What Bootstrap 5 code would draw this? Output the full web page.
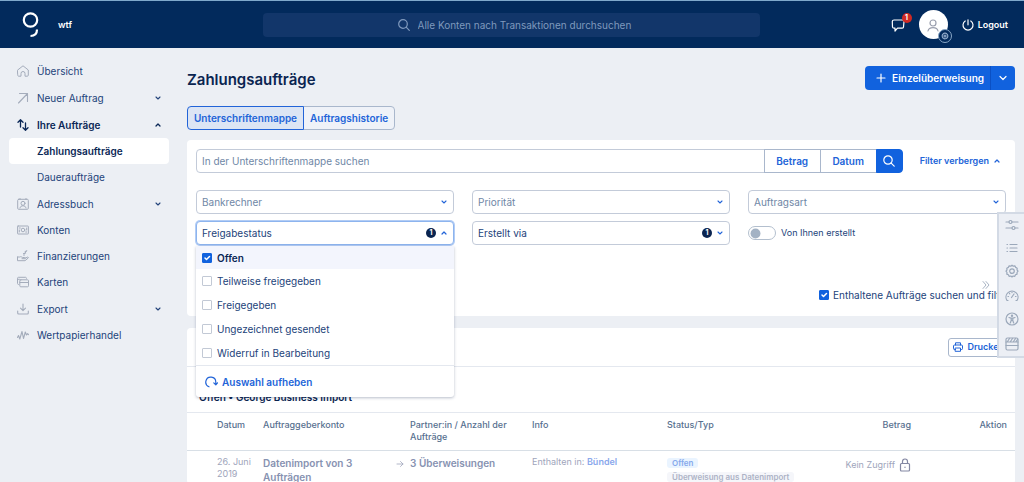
<!DOCTYPE html>
<html lang="de">
<head>
<meta charset="utf-8">
<meta name="viewport" content="width=device-width, initial-scale=1">
<title>Zahlungsaufträge</title>
<link href="https://cdn.jsdelivr.net/npm/bootstrap@5.3.0/dist/css/bootstrap.min.css" rel="stylesheet">
<style>
:root { --navy:#022a5c; --ink:#23437a; --blue:#1162de; --link:#2264d8; --muted:#6f87a6; --line:#c3cbd9; --soft:#e4e8ef; --page:#eceff4; }
body { font-family:Inter,"Liberation Sans",sans-serif; font-size:10px; line-height:12px; color:var(--ink); background:var(--page); height:100vh; overflow:hidden; }
svg { display:block; fill:none; stroke:currentColor; stroke-width:1.2; stroke-linecap:round; stroke-linejoin:round; flex:none; }
a { text-decoration:none; color:inherit; }
.topbar { background:var(--navy); border-top:1px solid #7fa9cc; height:48px; color:#fff; }
.brand-area { width:263px; padding-left:22px; gap:19px; }
.brand-area, .logout { font-size:9px; }
.global-search { background:#12366a; border-radius:4px; height:24px; width:497px; padding-left:10px; color:#7f99bd; }
.global-search input { background:none; border:0; padding:0; width:218px; color:inherit; font-size:10px; line-height:14px; outline:0; }
.find-input::placeholder { color:var(--muted); opacity:1; }
.global-search input::placeholder { color:#7f99bd; opacity:1; }
.plain { border:0; background:none; padding:0; color:inherit; font-size:inherit; line-height:inherit; }
.w6 { font-weight:600; }
.user-tools { gap:14px; }
.counter { top:-5px; right:-7px; width:10px; height:10px; border-radius:50%; background:#d02a24; font-size:7px; line-height:10px; text-align:center; font-weight:700; }
.avatar { width:29px; height:29px; border-radius:50%; background:#fff; color:#9a9fae; }
.gear-dot { right:-4px; bottom:-4px; width:14px; height:14px; border-radius:50%; background:var(--navy); border:1px solid #8aa7c7; color:#8fa9c9; }
.side { width:187px; padding:10px 18px 0 9px; flex:none; }
.side a { height:26px; display:flex; align-items:center; padding:0 7px 0 8px; gap:8px; border-radius:4px; }
.side a.tall { height:27px; }
.side a svg { color:#a4acbb; stroke-width:1.1; }
.side a svg.chev { color:var(--ink); margin-left:auto; }
.side a.open svg { color:#0a2756; stroke-width:1.3; }
.side a.sub { padding-left:28px; }
.side a.now { background:#fff; }
.side a.now, .side a.open { color:#0a2756; font-weight:600; }
.content-area { min-width:0; padding-right:9px; }
.title-row { padding:18px 0 16px; }
h1 { font-size:15px; line-height:20px; font-weight:600; color:#0a2450; margin:0; padding-top:4px; }
.main-btn { background:var(--blue); color:#fff; border:0; height:24px; font-size:10px; line-height:12px; font-weight:600; padding:0 6px 0 11px; border-radius:4px 0 0 4px; gap:6px; }
.main-btn.more { padding:0 7px; border-left:1px solid #0b50c4; border-radius:0 4px 4px 0; }
.tabs { margin-bottom:10px; }
.tabs .btn { height:24px; font-size:10px; line-height:12px; font-weight:600; color:var(--link); border:1px solid #a9b7cc; border-radius:4px; padding:0 6px; background:#eff2f8; }
.tabs .btn.active { background:#dce5f4; border-color:var(--link); color:var(--link); }
.panel { background:#fff; border-radius:4px; }
.filters { padding:9px 9px 15px; }
.find-input { height:24px; font-size:10px; line-height:12px; border:1px solid var(--line); border-radius:4px 0 0 4px; padding:0 5px; min-width:0; }
.find-btn { height:24px; border:1px solid #a9b7cc; background:#fff; color:var(--link); font-size:10px; line-height:12px; font-weight:600; padding:0; width:57px; margin-left:-1px; }
.find-btn.go { width:27px; background:var(--blue); border-color:var(--blue); color:#fff; border-radius:0 4px 4px 0; }
.filter-link { color:var(--link); font-size:9px; font-weight:600; gap:5px; padding:0 6px 0 17px; }
.filter-grid { display:grid; grid-template-columns:repeat(3,1fr); gap:7px 18px; margin-top:17px; }
.form-select, .pick { width:100%; height:24px; font-size:10px; line-height:12px; border:1px solid var(--line); border-radius:4px; padding:0 5px; color:var(--muted); background-color:#fff; }
.form-select { background-position:right 5px center; background-size:8px 8px; background-image:url("data:image/svg+xml,%3Csvg xmlns='http://www.w3.org/2000/svg' viewBox='0 0 8 8'%3E%3Cpath d='M2 3l2 2 2-2' fill='none' stroke='%232264d8' stroke-width='1.1' stroke-linecap='round'/%3E%3C/svg%3E"); }
.form-select.set, .pick { color:var(--ink); }
.pick { border-color:#8db4ee; box-shadow:0 0 0 1px #b3cdf5; }
.num { width:10px; height:10px; border-radius:50%; background:#0a2450; color:#fff; font-size:7px; line-height:10px; font-weight:700; text-align:center; }
.num.over { right:18px; top:7px; }
.pick-menu { top:25px; left:0; right:0; z-index:5; background:#fff; box-shadow:0 1px 3px rgba(20,40,80,.3); border-radius:0 0 3px 3px; }
.pick-menu label { display:flex; align-items:center; height:24px; padding-left:6px; gap:5px; }
.pick-menu label.on { background:#f3f5fd; color:#0a2756; font-weight:600; height:23px; }
.form-check-input { width:10px; height:10px; margin:0; border:1px solid #c2c9d5; flex:none; }
.form-check-input[type=checkbox] { border-radius:1px; }
.form-check-input:checked { background-color:var(--blue); border-color:var(--blue); background-size:10px 10px; }
.form-switch .form-check-input[type=checkbox] { width:28px; height:14px; border-radius:7px; border-color:#b3bfce; background-size:11px 11px; margin:0; background-position:left 1px center; --bs-form-switch-bg:url("data:image/svg+xml,%3Csvg xmlns='http://www.w3.org/2000/svg' viewBox='-4 -4 8 8'%3E%3Ccircle r='3.6' fill='%23a3b2c4'/%3E%3C/svg%3E"); }
.form-switch { font-size:9px; gap:5px; padding:0; margin:0; min-height:0; }
.clear-row { border-top:1px solid var(--soft); height:32px; padding-left:9px; color:var(--link); }
.contained-row { padding:44px 0 0 623px; white-space:nowrap; }
.contained { gap:4px; }
.orders-panel { margin-top:12px; }
.print-row { height:39px; border-bottom:1px solid var(--soft); padding-right:5px; }
.print-btn { height:19px; border:1px solid #a9b7cc; border-radius:3px; background:#fff; color:var(--link); font-size:9px; line-height:12px; font-weight:600; gap:4px; padding:0 5px 0 4px; }
h2 { font-size:10px; line-height:12px; font-weight:600; color:#0a2450; margin:0; padding:24px 12px 9px; border-bottom:1px solid var(--soft); }
.orders { width:100%; table-layout:fixed; line-height:12px; }
.orders th { font-size:9px; font-weight:500; color:#57708f; vertical-align:top; height:37px; padding:6px 0 0; border-bottom:1px solid #d8dfe6; }
.orders td { vertical-align:top; padding:5px 0 0; color:#a0a5bb; font-size:9px; }
.orders td.strong-cell { font-size:10px; line-height:14px; font-weight:600; color:#8792b1; }
.bundle { color:#8aa8ec; }
.tag { width:fit-content; font-size:8px; line-height:10px; font-weight:600; padding:0 5px; border-radius:3px; background:#f5f6fa; color:#adb3c6; white-space:nowrap; }
.tag.open-tag { background:#eaf4ff; color:#86a9ec; margin:2px 0 4px; }
.no-access { padding-top:2px; }
.dock { right:0; top:212px; width:27px; height:146px; background:#eceff5; border:2px solid #d3dae5; border-right:0; color:#9ba8ba; z-index:6; }
.dock-tab { right:34px; top:280px; color:#a9b4c4; }
</style>
</head>
<body>
<header class="topbar d-flex align-items-center">
  <div class="brand-area d-flex align-items-center">
    <a href="#" aria-label="Startseite"><svg width="17" height="26" viewBox="0 0 17 26"><g stroke-width="2.200"><circle cx="8.500" cy="8" r="6.700"/><path stroke-linecap="butt" d="M15 17.500c0 4-2.500 6.500-6.500 6.500"/></g></svg></a>
    <span class="w6">wtf</span>
  </div>
  <label class="global-search d-flex align-items-center justify-content-center gap-2">
    <svg width="12" height="12" viewBox="0 0 12 12"><circle cx="5" cy="5" r="4.300"/><path d="M8.200 8.200L11.300 11.300"/></svg>
    <input type="text" aria-label="Suche" placeholder="Alle Konten nach Transaktionen durchsuchen">
  </label>
  <div class="user-tools d-flex align-items-center ms-auto me-3">
    <button class="plain position-relative" type="button" aria-label="Nachrichten"><svg width="14" height="14" viewBox="0 0 14 14"><path d="M3 2h8.500c1 0 1.500.5 1.500 1.500L12.500 9c0 .8-.5 1.200-1.300 1.200H6.500L4 13v-2.800H3C2 10.200 1.600 9.800 1.500 9L1.300 3.600C1.300 2.600 2 2 3 2z"/></svg><span class="counter position-absolute text-white">1</span></button>
    <button class="plain avatar position-relative d-flex align-items-center justify-content-center" type="button" aria-label="Profil"><svg width="14" height="14" viewBox="0 0 14 14"><circle cx="7" cy="5" r="3"/><path d="M2 13c.5-2.500 2.300-3.300 5-3.300s4.500.8 5 3.300"/></svg><span class="gear-dot position-absolute d-flex align-items-center justify-content-center"><svg width="8" height="8" viewBox="0 0 8 8"><circle cx="4" cy="4" r="2.800" stroke-dasharray="1.500 .7"/><circle cx="4" cy="4" r="1"/></svg></span></button>
    <a href="#" class="d-flex align-items-center gap-1 w6 logout"><svg width="12" height="12" viewBox="0 0 12 12"><path d="M6 .8v5M3.200 2a5 5 0 1 0 5.600 0"/></svg>Logout</a>
  </div>
</header>

<div class="d-flex">
<nav class="side">
  <a href="#"><svg width="12" height="12" viewBox="0 0 12 12"><g stroke-width="1"><path d="M.7 5L6 .8 11.300 5v5.200c0 .6-.4 1-1 1H8V8.500a2 2 0 0 0-4 0v2.700H1.700c-.6 0-1-.4-1-1z"/></g></svg>Übersicht</a>
  <a href="#" class="tall"><svg width="12" height="12" viewBox="0 0 12 12"><path d="M1.500 11L10.500 1.500M2.500 1.500h8v8"/></svg>Neuer Auftrag<svg class="chev" width="8" height="8" viewBox="0 0 8 8"><path d="M2 3l2 2 2-2"/></svg></a>
  <a href="#" class="tall open"><svg width="12" height="12" viewBox="0 0 12 12"><path d="M3.500 8V1M1 3.200L3.500.8 6 3.200M8.500 4v7M6 8.800l2.500 2.400L11 8.800"/></svg>Ihre Aufträge<svg class="chev" width="8" height="8" viewBox="0 0 8 8"><path d="M2 5l2-2 2 2"/></svg></a>
  <a href="#" class="sub now">Zahlungsaufträge</a>
  <a href="#" class="sub">Daueraufträge</a>
  <a href="#" class="tall"><svg width="12" height="12" viewBox="0 0 12 12"><g stroke-width="1"><rect x=".7" y="1.300" width="10.600" height="10" rx="1"/><path d="M3 .5v1M9 .5v1M3 10c.3-1.700 1.500-2.200 3-2.200S8.700 8.300 9 10"/><circle cx="6" cy="5.300" r="2"/></g></svg>Adressbuch<svg class="chev" width="8" height="8" viewBox="0 0 8 8"><path d="M2 3l2 2 2-2"/></svg></a>
  <a href="#"><svg width="12" height="12" viewBox="0 0 12 12"><g stroke-width="1"><rect x=".6" y="2" width="10.800" height="8" rx=".5"/><circle cx="6" cy="6" r="1.800"/><path d="M2.300 4h1M8.700 8h1M2.300 6v2M9.700 4v2"/></g></svg>Konten</a>
  <a href="#"><svg width="12" height="12" viewBox="0 0 12 12"><g stroke-width="1"><path d="M.5 7h2.200c1-.7 2 0 3 .5h2c.8 0 .8 1.200 0 1.200H5M8 8.300l2.500-1.200c.8-.3 1.200.6.600 1L8 10.700H.5V7M7 4.500v1M9.500 1l-1.500.5.5 1.500M8 2.500L10 .6M6.500 3.500h1.500"/></g></svg>Finanzierungen</a>
  <a href="#"><svg width="12" height="12" viewBox="0 0 12 12"><g stroke-width="1"><path d="M1.500 8.500c-.6 0-1-.4-1-1V2.300c0-.6.400-1 1-1h7c.6 0 1 .4 1 1M.5 3.300h2"/><rect x="2.800" y="3.800" width="8.700" height="7" rx="1"/><path d="M2.800 6.500h8.700"/></g></svg>Karten</a>
  <a href="#" class="tall"><svg width="12" height="12" viewBox="0 0 12 12"><path d="M6 1v6.500M3.500 5.200L6 7.700l2.500-2.500M.7 8v2c0 .7.400 1 1 1h8.600c.6 0 1-.3 1-1V8"/></svg>Export<svg class="chev" width="8" height="8" viewBox="0 0 8 8"><path d="M2 3l2 2 2-2"/></svg></a>
  <a href="#"><svg width="12" height="12" viewBox="0 0 12 12"><path d="M.5 8.500l1-2 1.300 3.500L5 2.500l1.500 7L8.300 3l1.200 3L10.600 4.600l1 1"/></svg>Wertpapierhandel</a>
</nav>

<main class="content-area flex-grow-1">
  <div class="title-row d-flex justify-content-between align-items-center">
    <h1>Zahlungsaufträge</h1>
    <div class="d-flex">
      <button class="main-btn d-flex align-items-center" type="button"><svg width="10" height="10" viewBox="0 0 10 10"><path d="M5 1v8M1 5h8"/></svg>Einzelüberweisung</button>
      <button class="main-btn more" type="button" aria-label="Weitere Aufträge"><svg width="10" height="10" viewBox="0 0 10 10"><path d="M2 3.500l3 3 3-3"/></svg></button>
    </div>
  </div>
  <div class="btn-group tabs">
    <button class="btn active" type="button">Unterschriftenmappe</button>
    <button class="btn" type="button">Auftragshistorie</button>
  </div>

  <section class="panel filters">
    <div class="d-flex align-items-center">
      <input class="find-input flex-grow-1" type="text" aria-label="Suchen" placeholder="In der Unterschriftenmappe suchen">
      <button class="find-btn" type="button">Betrag</button>
      <button class="find-btn" type="button">Datum</button>
      <button class="find-btn go d-flex align-items-center justify-content-center" type="button" aria-label="Suchen"><svg width="12" height="12" viewBox="0 0 12 12"><circle cx="5" cy="5" r="4.200"/><path d="M8.200 8.200l3 3"/></svg></button>
      <a href="#" class="filter-link d-flex align-items-center">Filter verbergen<svg width="6" height="8" viewBox="1 0 6 8"><path d="M2 5l2-2 2 2"/></svg></a>
    </div>
    <div class="filter-grid">
      <select class="form-select" aria-label="Bankrechner"><option>Bankrechner</option></select>
      <select class="form-select" aria-label="Priorität"><option>Priorität</option></select>
      <select class="form-select" aria-label="Auftragsart"><option>Auftragsart</option></select>
      <div class="position-relative">
        <button class="pick d-flex align-items-center" type="button" aria-expanded="true">Freigabestatus<span class="num ms-auto me-1">1</span><svg width="8" height="8" viewBox="0 0 8 8" color="#2264d8"><path d="M2 5l2-2 2 2"/></svg></button>
        <div class="pick-menu position-absolute">
          <label class="on"><input class="form-check-input" type="checkbox" checked>Offen</label>
          <label><input class="form-check-input" type="checkbox">Teilweise freigegeben</label>
          <label><input class="form-check-input" type="checkbox">Freigegeben</label>
          <label><input class="form-check-input" type="checkbox">Ungezeichnet gesendet</label>
          <label><input class="form-check-input" type="checkbox">Widerruf in Bearbeitung</label>
          <div class="clear-row d-flex align-items-center"><button class="plain w6 d-flex align-items-center gap-1" type="button"><svg width="13" height="12" viewBox="0 0 13 12"><path d="M4 10.800A5 5 0 1 1 10.800 6v2.500M8.800 6.800l2 2 1.700-2"/></svg>Auswahl aufheben</button></div>
        </div>
      </div>
      <div class="position-relative">
        <select class="form-select set" aria-label="Erstellt via"><option>Erstellt via</option></select>
        <span class="num over position-absolute">1</span>
      </div>
      <label class="form-switch d-flex align-items-center"><input class="form-check-input" type="checkbox" role="switch">Von Ihnen erstellt</label>
    </div>
    <div class="contained-row d-flex"><label class="contained d-flex align-items-center"><input class="form-check-input" type="checkbox" checked>Enthaltene Aufträge suchen und filtern</label></div>
  </section>

  <section class="panel orders-panel">
    <div class="print-row d-flex align-items-center justify-content-end"><button class="print-btn d-flex align-items-center" type="button"><svg width="10" height="10" viewBox="0 0 10 10"><g stroke-width="1"><path d="M2.500 3V.8h5V3M2.500 7.500H1.300c-.5 0-.8-.3-.8-.8V4c0-.6.400-1 1-1h7c.6 0 1 .4 1 1v2.700c0 .5-.3.800-.8.800H7.500"/><path d="M2.500 6h5v3.300h-5z"/></g></svg>Drucken</button></div>
    <h2>Offen • George Business Import</h2>
    <table class="orders">
      <colgroup><col style="width:30px"><col style="width:46px"><col style="width:133px"><col style="width:14px"><col style="width:122px"><col style="width:135px"><col><col style="width:112px"><col style="width:104px"></colgroup>
      <thead><tr><th></th><th>Datum</th><th>Auftraggeberkonto</th><th></th><th>Partner:in / Anzahl der Aufträge</th><th>Info</th><th>Status/Typ</th><th class="text-end">Betrag</th><th class="text-end pe-2">Aktion</th></tr></thead>
      <tbody><tr><td></td><td class="pe-2">26. Juni 2019</td><td class="strong-cell pe-4">Datenimport von 3 Aufträgen</td><td><svg class="mt-1" width="8" height="8" viewBox="0 0 8 8"><g stroke-width=".8"><path d="M1 4h6M4.500 1.500L7 4 4.500 6.500"/></g></svg></td><td class="strong-cell">3 Überweisungen</td><td>Enthalten in: <a href="#" class="w6 bundle">Bündel</a></td><td><div class="tag open-tag">Offen</div><div class="tag">Überweisung aus Datenimport</div></td><td><div class="d-flex align-items-center justify-content-end gap-1 no-access">Kein Zugriff<svg width="12" height="14" viewBox="0 0 12 14" color="#8488a3"><rect x="1.500" y="5.500" width="9" height="7.500" rx="1"/><path d="M3.500 5.500V3.500a2.500 2.500 0 0 1 5 0v2M6 9v.5"/></svg></div></td><td></td></tr></tbody>
    </table>
  </section>
</main>
</div>

<svg class="dock-tab position-absolute" width="8" height="10" viewBox="0 0 8 10"><g stroke-width="1"><path d="M1 1.500L4 5 1 8.500M4 1.500L7 5 4 8.500"/></g></svg>
<aside class="dock position-absolute d-flex flex-column align-items-center justify-content-around">
  <button class="plain" type="button" aria-label="Einstellungen"><svg width="14" height="12" viewBox="0 0 14 12"><path d="M1 3h3M7 3h6M1 9h6M10 9h3"/><circle cx="5.500" cy="3" r="1.500"/><circle cx="8.500" cy="9" r="1.500"/></svg></button>
  <button class="plain" type="button" aria-label="Liste"><svg width="12" height="12" viewBox="0 0 12 12"><path d="M1 2.500h.5M4 2.500h7M1 6h.5M4 6h7M1 9.500h.5M4 9.500h7"/></svg></button>
  <button class="plain" type="button" aria-label="Optionen"><svg width="14" height="14" viewBox="0 0 14 14"><path d="M7 1.200l1.300 1 1.700-.3.700 1.500 1.500.8-.2 1.600L13 7.200l-1 1.300.1 1.600-1.600.7-.7 1.500-1.700-.3L7 13l-1.200-1-1.700.3-.7-1.500-1.600-.7.200-1.600L1 7.200l1-1.400-.2-1.600 1.500-.8L4 1.900l1.800.3z"/><circle cx="7" cy="7.100" r="2.300"/></svg></button>
  <button class="plain" type="button" aria-label="Dashboard"><svg width="14" height="13" viewBox="0 0 14 13"><path d="M3 11.500H2A6 6 0 1 1 12 11.500h-1M6.500 8.500L9 5M3 7.500h.5M4.500 4.500l.3.300M7 3.300v.3M11 7.500h-.5"/></svg></button>
  <button class="plain" type="button" aria-label="Barrierefreiheit"><svg width="14" height="14" viewBox="0 0 14 14"><circle cx="7" cy="7" r="6"/><circle cx="7" cy="3.700" r=".6"/><path d="M4 5.500l2 .6h2l2-.6M6.200 6v2.500L5.300 11M7.800 6v2.500l.9 2.500M6.200 8.300h1.600"/></svg></button>
  <button class="plain" type="button" aria-label="Karten"><svg width="14" height="14" viewBox="0 0 14 14"><rect x="1" y="1" width="12" height="12" rx="1.500"/><path d="M1 5h12M1 8.500h12M2.500 4.500L4.500 1.500M5.500 4.500l2-3M8.500 4.500l2-3M11 4.500l1.500-2"/></svg></button>
</aside>
<script src="https://cdn.jsdelivr.net/npm/bootstrap@5.3.0/dist/js/bootstrap.bundle.min.js"></script>
</body>
</html>
